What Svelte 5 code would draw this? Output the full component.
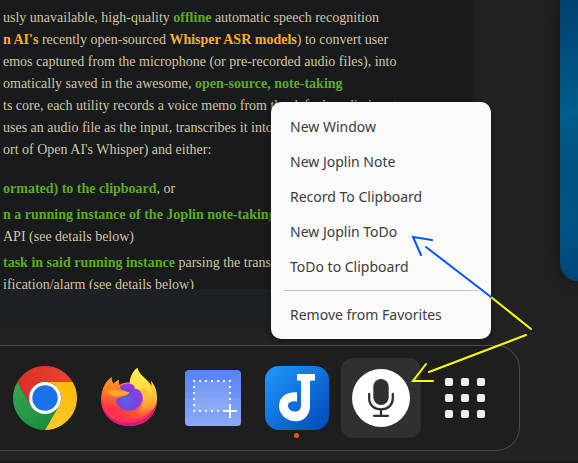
<script>
  const groups = [
    ['New Window', 'New Joplin Note', 'Record To Clipboard', 'New Joplin ToDo', 'ToDo to Clipboard'],
    ['Remove from Favorites']
  ];
  const gridDots = [0, 16, 32];
</script>

<main class="desktop">
  <div class="workspace">
    <section class="browser">
      <article>
        <p>
          <span>usly unavailable, high-quality <b>offline</b> automatic speech recognition</span>
          <span><b class="gold">n AI's</b> recently open-sourced <b class="gold">Whisper ASR models</b>) to convert user</span>
          <span>emos captured from the microphone (or pre-recorded audio files), into</span>
          <span>omatically saved in the awesome, <b>open-source, note-taking</b></span>
          <span>ts core, each utility records a voice memo from the default audio input</span>
          <span>uses an audio file as the input, transcribes it into text</span>
          <span>ort of Open AI's Whisper) and either:</span>
        </p>
        <ul>
          <li><span><b>ormated) to the clipboard</b>, or</span></li>
          <li>
            <span><b>n a running instance of the Joplin note-taking</b></span>
            <span>API (see details below)</span>
          </li>
          <li>
            <span><b>task in said running instance</b> parsing the transcribed</span>
            <span>ification/alarm (see details below)</span>
          </li>
        </ul>
      </article>
      <div class="strip"></div>
    </section>
    <div class="neighbour"></div>

    <div class="menu" role="menu">
      {#each groups as group, i}
        {#if i > 0}<hr />{/if}
        {#each group as item}
          <button role="menuitem">{item}</button>
        {/each}
      {/each}
    </div>
  </div>

  <nav class="dock" aria-label="Dock">
    <button aria-label="Google Chrome">
      <svg width="64" height="64" viewBox="0 0 64 64">
        <defs>
          <linearGradient id="cr" x1="0" y1="0" x2="1" y2="0"><stop offset="0" stop-color="#d93025" /><stop offset="1" stop-color="#ea4335" /></linearGradient>
          <linearGradient id="cg" x1="0" y1="0" x2=".6" y2="1"><stop offset="0" stop-color="#34a853" /><stop offset="1" stop-color="#1e8e3e" /></linearGradient>
          <linearGradient id="cy" x1=".6" y1="0" x2=".2" y2="1"><stop offset="0" stop-color="#fbbc04" /><stop offset="1" stop-color="#fcc934" /></linearGradient>
        </defs>
        <path fill="url(#cr)" d="M4.3 16A32 32 0 0 1 59.7 16H32V32L18.1 40Z" />
        <path fill="url(#cg)" d="M4.3 16A32 32 0 0 0 32 64L45.9 40 32 32 18.1 40Z" />
        <path fill="url(#cy)" d="M59.7 16A32 32 0 0 1 32 64L45.9 40A16 16 0 0 0 32 16Z" />
        <circle cx="32" cy="32" r="16" fill="#fff" />
        <circle cx="32" cy="32" r="12.7" fill="#1a73e8" />
      </svg>
    </button>
    <button aria-label="Firefox">
      <svg width="64" height="64" viewBox="0 0 64 64">
        <defs>
          <linearGradient id="fb" gradientUnits="userSpaceOnUse" x1="54" y1="12" x2="16" y2="58"><stop offset="0" stop-color="#ffdf45" /><stop offset=".25" stop-color="#ffb436" /><stop offset=".5" stop-color="#ff6b32" /><stop offset=".75" stop-color="#ff3b45" /><stop offset="1" stop-color="#f52060" /></linearGradient>
          <radialGradient id="fp" cx=".4" cy=".65" r=".75"><stop offset="0" stop-color="#5a62df" /><stop offset=".5" stop-color="#7542e0" /><stop offset="1" stop-color="#b833e1" /></radialGradient>
          <linearGradient id="fy" gradientUnits="userSpaceOnUse" x1="42" y1="2" x2="48" y2="50"><stop offset="0" stop-color="#fff44f" /><stop offset=".5" stop-color="#ffd63e" /><stop offset=".8" stop-color="#ffa034" /><stop offset="1" stop-color="#ff7034" stop-opacity="0" /></linearGradient>
          <linearGradient id="fo" gradientUnits="userSpaceOnUse" x1="14" y1="11" x2="14" y2="44"><stop offset="0" stop-color="#ff9820" /><stop offset=".5" stop-color="#ff7a26" /><stop offset="1" stop-color="#ff4a3c" stop-opacity="0" /></linearGradient>
        </defs>
        <path fill="url(#fb)" d="M14.700 11.300C14.500 14 15 16 16.300 17.800L21.500 13.700 22.300 19C26 17 30 16 33 17 33 11 36 5 40.300 2 42 10 53 14 54.500 20.500L54 14.500C58.500 20 60.500 27 60 34A28 26 0 0 1 4 34C4 26 7 16 14.700 11.300Z" />
        <path fill="#e3128b" d="M4.300 36C7 49 17 55.500 31 56 45 56 56 49 59.800 36 58 52 46 60 32 60 18 60 6 51 4.300 36Z" />
        <path fill="#ff3550" d="M4.300 34C8 46 18 53 31 53.500 43 53.500 51 49 57 41 53 51 43 56.500 32 56.500 18 56.500 6 49 4.300 34Z" />
        <circle cx="32" cy="31" r="13.800" fill="url(#fp)" />
        <path fill="url(#fo)" d="M14.700 11.300C14.500 14 15 16 16.300 17.800L21.500 13.700 22.300 19.500C22 23 26 25 32 26.500 31 29 27 30 23 31 19 33 18.500 36 19.500 39L14 44 5 40C3 28 7 16 14.700 11.300Z" />
        <path fill="#ffa52c" d="M10.500 25.700C15 23.500 19 24 23 24.500 27 25 32 25.500 32.300 27 31 29 28 29.500 24 30.300 19.500 31.500 14 30 10.500 25.700Z" />
        <path fill="url(#fy)" d="M32.500 17.500C33 11 36 5 40.300 2 42 10 53 14 54 22 58 33 53 44 44 49 39 50 42 46 44 42 48 34 46 28 43 25 42 23.500 40 23 38 23 38 20 36 18 32.500 17.500Z" />
        <path fill="#ffa934" opacity=".5" d="M43 24C50 30 50 39 44 46 53 41 54 30 49 24 47 22 45 22 43 24Z" />
      </svg>
    </button>
    <button aria-label="Screenshot">
      <svg width="64" height="64" viewBox="0 0 64 64">
        <defs><linearGradient id="ss" x1="0" y1="0" x2="0" y2="1"><stop offset="0" stop-color="#5583f4" /><stop offset="1" stop-color="#85a4fa" /></linearGradient></defs>
        <rect x="4" y="4" width="56" height="56" rx="4" fill="url(#ss)" />
        <path fill="#fff" opacity=".13" d="M13 15H49V45H13Z" />
        <path fill="#fff" opacity=".05" d="M4 32H60V60H4Z" />
        <path fill="none" stroke="#fff" stroke-width="2" stroke-dasharray="2 4" d="M12 15H50M12 45H44" />
        <path fill="none" stroke="#fff" stroke-width="2" stroke-dasharray="2 4" d="M13 20V43M49 20V38" />
        <path stroke="#fff" stroke-width="2" d="M42 45H56M49 38V52" />
      </svg>
    </button>
    <button aria-label="Joplin">
      <svg width="64" height="64" viewBox="0 0 64 64">
        <defs><linearGradient id="jo" x1="0" y1="0" x2="1" y2="1"><stop offset="0" stop-color="#2199ff" /><stop offset="1" stop-color="#0048b4" /></linearGradient></defs>
        <rect width="64" height="64" rx="14" fill="url(#jo)" />
        <path fill="#fff" d="M32 8H50V14.500H46Q45 14.500 45 16V40C45 49 39 55.300 31 55.300 21 55.300 14 48 14 40 14 31 21 25.700 32 26.300V35.500C27 34.500 23 36.500 23 39.500 23 43 26 45.500 30 45.500 34 45.500 36 43 36 39V16Q36 14.500 34.500 14.500H32Z" />
      </svg>
      <i class="running"></i>
    </button>
    <button class="active" aria-label="Voice memo">
      <svg width="64" height="64" viewBox="0 0 64 64">
        <circle cx="32" cy="32" r="29" fill="#fff" />
        <rect x="24.300" y="13" width="15.400" height="26" rx="7.700" fill="#303030" />
        <path fill="none" stroke="#303030" stroke-width="2.300" stroke-linecap="round" d="M20.200 28V32.500C20.200 39 25 43.300 32 43.300S43.800 39 43.800 32.500V28M32 43.300V49.500M25 49.800H39" />
      </svg>
    </button>
    <button aria-label="Show Applications">
      <svg width="64" height="64" viewBox="0 0 64 64">
        {#each gridDots as y}
          {#each gridDots as x}
            <rect x={x + 12} y={y + 12} width="8" height="8" rx="2" fill="#f0efed" />
          {/each}
        {/each}
      </svg>
    </button>
  </nav>

  <svg class="arrows" width="578" height="463" viewBox="0 0 578 463" aria-hidden="true">
    <g fill="none" stroke-width="2" stroke-linecap="round">
      <path stroke="#ff0" d="M491 297L531 329M526 335L429 372M426 364L413 381H433" />
      <path stroke="#0557ee" d="M491 297L426 247M432 240L413 237L421 255" />
    </g>
  </svg>
</main>

<style>
  :global(body) {
    background: #222;
  }
  .desktop {
    position: relative;
    box-sizing: border-box;
    min-height: 100vh;
    overflow: hidden;
    padding-bottom: 10px;
    border-bottom: 2px solid #1b1718;
    background: #222;
  }
  .workspace {
    position: relative;
    display: flex;
    align-items: flex-start;
    gap: 87px;
    margin-bottom: 24px;
  }
  .browser {
    flex: 1;
    min-width: 0;
    box-shadow: 0 0 6px #1a1a1a;
  }
  article {
    overflow: hidden;
    padding: 7px 0 0 3px;
    background: #181a1b;
    color: #d3c5a3;
    font: 14px/22px 'Liberation Serif', serif;
    white-space: nowrap;
  }
  article span {
    display: block;
  }
  b {
    color: #5bab25;
  }
  .gold {
    color: #f7b02a;
  }
  p,
  ul,
  li {
    margin: 0;
    padding: 0;
    list-style: none;
  }
  ul {
    display: grid;
    gap: 4px;
    margin: 17px 0 -7px;
  }
  .strip {
    height: 32px;
    background: #1d2024;
  }
  .neighbour {
    width: 18px;
    height: 281px;
    border-bottom-left-radius: 24px;
    background: linear-gradient(170deg, #00416f, #005d8c 40%, #00527f 60%, #005585 80%, #00457a);
    box-shadow: 0 0 20px #111;
  }
  .menu {
    position: absolute;
    top: 102px;
    left: 271px;
    box-sizing: border-box;
    width: 220px;
    padding: 7px 0;
    border-radius: 10px;
    background: #fafafa;
    box-shadow: 0 1px 4px #111;
  }
  .menu button {
    display: block;
    width: 100%;
    height: 35px;
    padding: 0 19px;
    border: 0;
    background: none;
    color: #3d3d3d;
    font: 14px/35px 'Noto Sans', sans-serif;
    text-align: left;
  }
  hr {
    height: 1px;
    margin: 6px 13px;
    border: 0;
    background: #c6c6c6;
  }
  .dock {
    display: flex;
    gap: 4px;
    box-sizing: border-box;
    margin-right: 58px;
    padding: 12px 14px 12px 5px;
    border: 1px solid #484848;
    border-left: 0;
    border-radius: 0 24px 24px 0;
    background: #1e1e1e;
  }
  .dock button {
    position: relative;
    display: grid;
    place-items: center;
    width: 80px;
    height: 80px;
    padding: 0;
    border: 0;
    border-radius: 12px;
    background: none;
  }
  .dock .active {
    background: #303030;
  }
  .running {
    position: absolute;
    bottom: 0;
    left: 37px;
    width: 5px;
    height: 5px;
    border-radius: 50%;
    background: #e95420;
  }
  .arrows {
    position: absolute;
    top: 0;
    left: 0;
    pointer-events: none;
  }
</style>
